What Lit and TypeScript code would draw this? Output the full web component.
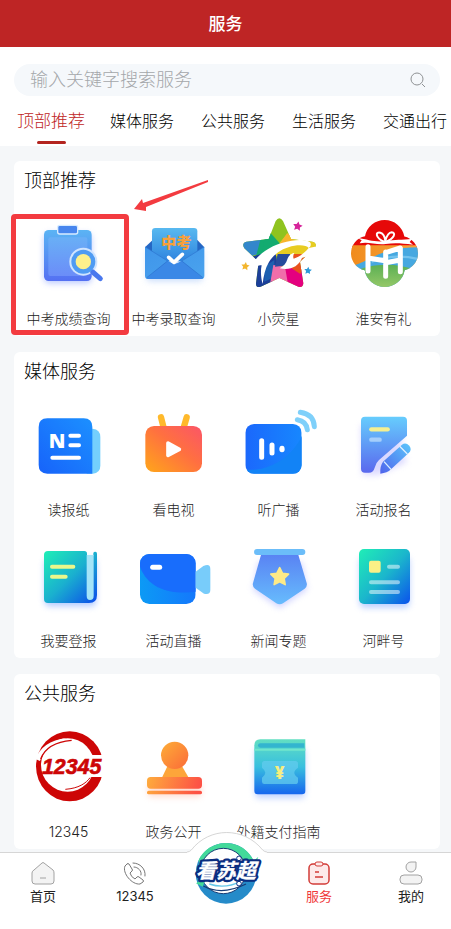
import { LitElement, html, svg, css, nothing, SVGTemplateResult } from "lit";
import { customElement, property, state } from "lit/decorators.js";
import { classMap } from "lit/directives/class-map.js";

interface Tile { label: string; icon: string; marked?: boolean }
interface Section { title: string; tiles: Tile[] }
interface Glyph { box: string; art: SVGTemplateResult }

const star = (cx: number, cy: number, r: number, turn = 0) =>
  Array.from({ length: 10 }, (_, i) => {
    const a = ((i * 36 - 90 + turn) * Math.PI) / 180;
    const d = i % 2 ? r * 0.5 : r;
    return `${(cx + d * Math.cos(a)).toFixed(1)},${(cy + d * Math.sin(a)).toFixed(1)}`;
  }).join(" ");

const GLYPHS: Record<string, Glyph> = {
  score: {
    box: "99 204 216 216",
    art: svg`
      <defs>
        <linearGradient id="a" x2="0" y2="1"><stop stop-color="#5bb4f4"/><stop offset="1" stop-color="#5470f2"/></linearGradient>
        <linearGradient id="b" x2="0" y2="1"><stop stop-color="#69aff6"/><stop offset="1" stop-color="#6b8df8"/></linearGradient>
      </defs>
      <rect class="glow" x="132" y="250" width="143" height="150" rx="16" fill="#8da6ff"/>
      <rect x="132" y="240" width="143" height="153" rx="14" fill="url(#a)"/>
      <rect x="145" y="262" width="117" height="116" rx="6" fill="url(#b)"/>
      <rect x="173" y="226" width="60" height="26" rx="6" fill="#4886ee" stroke="#d8ecff" stroke-width="4"/>
      <circle cx="250" cy="335" r="42" fill="#cfe4ff"/>
      <path d="M278 366L301 386" stroke="#4a78ee" stroke-width="15" stroke-linecap="round"/>
      <circle cx="250" cy="335" r="36" fill="#4f9bf3"/>
      <circle cx="250" cy="335" r="23" fill="#fdf08c"/>`,
  },
  admit: {
    box: "414 204 216 216",
    art: svg`
      <defs>
        <linearGradient id="a" x2="0" y2="1"><stop stop-color="#58b9f0"/><stop offset="1" stop-color="#2f84df"/></linearGradient>
        <linearGradient id="b" x2="1" y2="1"><stop stop-color="#3f95ea"/><stop offset="1" stop-color="#4aa3ee"/></linearGradient>
      </defs>
      <rect class="glow" x="440" y="300" width="168" height="94" rx="10" fill="#a9c8f8"/>
      <path d="M435 292L458 270H592L613 292L590 330H460Z" fill="#2567c4"/>
      <rect x="456" y="234" width="136" height="100" rx="10" fill="url(#a)"/>
      <path d="M435 290L524 345L613 290V377Q613 387 603 387H445Q435 387 435 377Z" fill="url(#b)"/>
      <path d="M440 384L502 332Q524 350 546 332L609 384Q606 387 600 387H445Z" fill="#3b88e6"/>
      <path d="M440 383L503 333M609 383L545 333M436 291L503 333M612 291L545 333" fill="none" stroke="#2c72cf" stroke-width="2"/>
      <text x="529" y="295" text-anchor="middle" class="cjk" font-size="46" fill="#f6a03c">中考</text>
      <path d="M506 322L522 337L547 313" fill="none" stroke="#fff" stroke-width="11" stroke-linecap="round" stroke-linejoin="round"/>`,
  },
  firefly: {
    box: "54 204 216 216",
    art: svg`
      <defs><clipPath id="a"><path d="M152 213Q163 196 174 213L198 267L262 275Q279 280 268 295L225 335L235 400Q234 414 220 410L163 384L107 410Q92 414 93 400L101 335L58 295Q49 280 64 275L131 267Z"/></clipPath></defs>
      <g clip-path="url(#a)">
        <rect x="50" y="200" width="230" height="220" fill="#8fc31f"/>
        <path d="M50 265L112 270L98 312L50 330Z" fill="#3387cb"/>
        <path d="M108 262L133 246L163 280L150 310L90 330L98 300Z" fill="#13ab70"/>
        <path d="M133 246L163 280L188 250L196 262L280 270V318H150Z" fill="#e8cc20"/>
        <path d="M120 262L134 246L164 280L160 300L110 310Z" fill="#13ab70"/>
        <path d="M164 282L186 250L204 262L198 290Z" fill="#f7b52c"/>
        <path d="M80 320L150 300L158 345L135 420H80Z" fill="#1c3f98"/>
        <path d="M118 350L148 330V355L140 385L118 395Z" fill="#1d5fb0"/>
        <path d="M145 345L180 350L198 420H132Z" fill="#f06eaa"/>
        <path d="M180 350L225 345L250 420H192Z" fill="#e4007f"/>
        <path d="M200 312H250L226 372L195 352Z" fill="#e8521d"/>
        <path d="M158 312H195V345L150 350Z" fill="#274b9c"/>
      </g>
      <path d="M70 362C92 316 135 282 200 272C232 267 256 272 257 280C258 288 256 291 251 294C246 286 228 284 208 287C176 292 148 310 132 336C120 356 116 378 113 402C108 384 106 364 110 346C100 346 84 350 70 362Z" fill="#fff"/>
      <path d="M270 290C276 302 276 312 273 320C256 317 242 320 231 324C220 350 196 362 164 355C176 349 184 340 187 328C190 318 198 310 208 309C204 316 204 322 206 326C224 320 240 308 251 294Z" fill="#fff"/>
      <polygon points="${star(218, 229, 15, 10)}" fill="#d6249a"/>
      <polygon points="${star(61, 349, 13, 8)}" fill="#f3b52c"/>
      <polygon points="${star(249, 362, 12, 5)}" fill="#2e9bd8"/>`,
  },
  gift: {
    box: "369 204 216 216",
    art: svg`
      <defs>
        <clipPath id="a"><circle cx="479" cy="270" r="60"/><circle cx="430" cy="310" r="52"/><circle cx="527" cy="310" r="52"/><circle cx="479" cy="350" r="61"/></clipPath>
        <linearGradient id="b" x2="0" y2="1"><stop stop-color="#5cb054"/><stop offset="1" stop-color="#9ccb6a"/></linearGradient>
        <linearGradient id="c" x2="1" y2="0"><stop stop-color="#f08a1c"/><stop offset="1" stop-color="#f7a63c"/></linearGradient>
      </defs>
      <g clip-path="url(#a)">
        <rect x="370" y="205" width="216" height="90" fill="#e60909"/>
        <path d="M370 286H590V350H370Z" fill="url(#c)"/>
        <path d="M390 345C440 330 470 290 590 292V420H390Z" fill="#46a8e0"/>
        <path d="M440 335C480 320 530 312 590 330" fill="none" stroke="#73c3ee" stroke-width="7"/>
        <path d="M370 372C440 338 510 335 590 366V420H370Z" fill="url(#b)"/>
      </g>
      <path d="M398 264C430 268 450 278 482 273C510 268 530 270 562 266L554 276L564 284C530 280 510 278 482 282C450 285 430 274 404 280L410 271Z" fill="#fff"/>
      <path d="M479 276C448 262 452 244 466 248C476 251 480 264 481 272C484 262 490 248 500 247C514 248 508 266 482 276Z" fill="none" stroke="#fff" stroke-width="6"/>
      <path d="M429 290V363M429 324L480 332M482 306V379M482 308L526 294V365M482 338L526 330" fill="none" stroke="#fff" stroke-width="15" stroke-linecap="round" stroke-linejoin="round"/>`,
  },
  paper: {
    box: "99 192 216 216",
    art: svg`
      <defs><linearGradient id="a" x1="1" y1="0" x2="0" y2="1"><stop stop-color="#1c90ff"/><stop offset="1" stop-color="#1763fa"/></linearGradient></defs>
      <path d="M260 251H278Q301 253 301 276V362Q301 384 278 386H260Z" fill="#74cffd"/>
      <path d="M142 220H251Q277 220 277 246V386H142Q116 386 116 360V246Q116 220 142 220Z" fill="url(#a)"/>
      <text x="171" y="310" text-anchor="middle" class="heavy" font-size="60" fill="#fff">N</text>
      <path d="M211 272H237M211 301H237M157 338H237" stroke="#fff" stroke-width="12" stroke-linecap="round"/>`,
  },
  tv: {
    box: "414 192 216 216",
    art: svg`
      <defs><linearGradient id="a" x1="0" y1="1" x2="1" y2="0"><stop stop-color="#ffa61a"/><stop offset=".55" stop-color="#ff7040"/><stop offset="1" stop-color="#fb5568"/></linearGradient></defs>
      <path d="M483 217L491 248M560 217L551 248" stroke="#ffb92b" stroke-width="19" stroke-linecap="round"/>
      <rect x="436" y="243" width="170" height="138" rx="26" fill="url(#a)"/>
      <path d="M504 294L538 313L504 331Z" fill="#fff" stroke="#fff" stroke-width="11" stroke-linejoin="round"/>`,
  },
  radio: {
    box: "54 192 216 216",
    art: svg`
      <defs><clipPath id="a"><rect x="61" y="237" width="169" height="149" rx="26"/></clipPath>
      <linearGradient id="b" x2="1" y2="0"><stop stop-color="#1b68fc"/><stop offset="1" stop-color="#1787fe"/></linearGradient></defs>
      <g clip-path="url(#a)">
        <rect x="61" y="237" width="169" height="149" fill="url(#b)"/>
        <path d="M61 374C130 380 200 340 232 270V390H61Z" fill="#1283f6"/>
      </g>
      <path d="M110 287V337M141 300V324" stroke="#fff" stroke-width="15" stroke-linecap="round"/>
      <ellipse cx="171" cy="312" rx="8" ry="10" fill="#fff"/>
      <path d="M226 202C252 206 267 220 268 245M217 224C236 227 245 236 247 254" fill="none" stroke="#7fd0fa" stroke-width="15" stroke-linecap="round"/>`,
  },
  signup: {
    box: "369 192 216 216",
    art: svg`
      <defs>
        <linearGradient id="a" x2="0" y2="1"><stop stop-color="#66cdfd"/><stop offset="1" stop-color="#5a68ee"/></linearGradient>
        <linearGradient id="b" x1="1" y1="0" x2="0" y2="1"><stop stop-color="#5bc6fb"/><stop offset="1" stop-color="#4f63ec"/></linearGradient>
      </defs>
      <path class="glow" d="M408 240H530V320L546 350L460 390H412Z" fill="#c4c0ff"/>
      <path d="M420 215H534Q546 215 546 227V272L462 345Q452 354 449 368Q445 383 432 383H420Q408 383 408 371V227Q408 215 420 215Z" fill="url(#a)"/>
      <path d="M439 253H488" stroke="#f5ef90" stroke-width="13" stroke-linecap="round"/>
      <path d="M439 284H464" stroke="#a5cefb" stroke-width="13" stroke-linecap="round"/>
      <path d="M474 350L531 299Q542 291 553 302Q562 314 551 324L498 373Q487 384 466 386Q464 364 474 350Z" fill="url(#b)"/>
      <path d="M477 350L499 374M524 304L547 327" stroke="#dcefff" stroke-width="4"/>`,
  },
  publish: {
    box: "99 45 216 216",
    art: svg`
      <defs><linearGradient id="a" x2="1" y2="1"><stop stop-color="#1fefb6"/><stop offset=".5" stop-color="#1ab0cf"/><stop offset="1" stop-color="#0b4bea"/></linearGradient></defs>
      <rect class="glow" x="134" y="100" width="154" height="144" rx="14" fill="#7fa8ff"/>
      <path d="M144 78H253Q261 78 261 86V92H280V84Q281 80 286 80Q291 80 291 86V210Q291 234 267 234H144Q132 234 132 222V90Q132 78 144 78Z" fill="url(#a)"/>
      <path d="M260 90H281V212Q281 225 270 225Q260 225 260 212Z" fill="#a4e4f8"/>
      <path d="M156 125H220M156 155H197" stroke="#eaf78b" stroke-width="12" stroke-linecap="round"/>`,
  },
  live: {
    box: "414 45 216 216",
    art: svg`
      <defs><clipPath id="a"><rect x="420" y="87" width="167" height="150" rx="28"/></clipPath>
      <linearGradient id="b" x2="1" y2="0"><stop stop-color="#0c9af5"/><stop offset="1" stop-color="#1478fc"/></linearGradient></defs>
      <g clip-path="url(#a)">
        <rect x="420" y="87" width="167" height="150" fill="url(#b)"/>
        <path d="M420 85H590V200C520 210 445 195 420 125Z" fill="#186dfc"/>
      </g>
      <path d="M587 140L610 123Q631 114 631 132V194Q631 211 612 206L587 188Z" fill="#78ccfa"/>
      <path d="M458 127H479" stroke="#fff" stroke-width="15" stroke-linecap="round"/>`,
  },
  topic: {
    box: "54 45 216 216",
    art: svg`
      <defs><linearGradient id="a" x2="0" y2="1"><stop stop-color="#5982f3"/><stop offset="1" stop-color="#67bcfd"/></linearGradient></defs>
      <path class="glow" d="M100 110H230L246 194L164 250L84 194Z" fill="#b3b8ff"/>
      <path d="M109 86H219L245 174Q248 184 239 191L174 235Q164 241 154 235L90 191Q81 184 84 174Z" fill="url(#a)"/>
      <rect x="87" y="72" width="154" height="18" rx="9" fill="#6bbdf9"/>
      <polygon points="${star(164, 156, 28)}" fill="#fdea88" stroke="#fdea88" stroke-width="5" stroke-linejoin="round"/>`,
  },
  channel: {
    box: "369 45 216 216",
    art: svg`
      <defs><linearGradient id="a" x2="1" y2="1"><stop stop-color="#20eeb6"/><stop offset=".5" stop-color="#1bb6cc"/><stop offset="1" stop-color="#0b52ec"/></linearGradient></defs>
      <rect class="glow" x="404" y="96" width="150" height="152" rx="14" fill="#8fb0ff"/>
      <rect x="402" y="72" width="153" height="165" rx="15" fill="url(#a)"/>
      <rect x="432" y="107" width="35" height="36" rx="6" fill="#fbf086"/>
      <path d="M492 125H519M438 172H519M438 201H519" stroke="#fff" stroke-opacity=".5" stroke-width="12" stroke-linecap="round"/>`,
  },
  hotline: {
    box: "99 198 216 216",
    art: svg`
      <ellipse cx="209" cy="304" rx="101" ry="105" fill="#cd0606"/>
      <circle cx="203" cy="300" r="80" fill="#fff"/>
      <path d="M106 282C118 250 150 224 200 219C160 232 130 252 120 288Z" fill="#fff"/>
      <path d="M122 282C136 245 168 230 215 226" fill="none" stroke="#cd0606" stroke-width="4"/>
      <path d="M196 373C236 370 258 355 270 338" fill="none" stroke="#cd0606" stroke-width="3"/>
      <path d="M265 270H316V336H255Z" fill="#fff"/>
      <text x="215" y="328" text-anchor="middle" class="digits" font-size="64" fill="#cd0606" stroke="#cd0606" stroke-width="2">12345</text>`,
  },
  stamp: {
    box: "414 198 216 216",
    art: svg`
      <defs><linearGradient id="a" gradientUnits="userSpaceOnUse" x1="450" y1="300" x2="600" y2="350"><stop stop-color="#feae3c"/><stop offset="1" stop-color="#fd5245"/></linearGradient>
      <linearGradient id="b" x2="1" y2="1"><stop stop-color="#fdae38"/><stop offset="1" stop-color="#fb6a38"/></linearGradient></defs>
      <rect class="glow" x="444" y="350" width="160" height="46" rx="10" fill="#ffc9b8"/>
      <path d="M504 300H544L567 340H485Z" fill="#fda53a"/>
      <circle cx="524" cy="271" r="41" fill="url(#b)"/>
      <rect x="441" y="336" width="165" height="35" rx="11" fill="url(#a)"/>
      <rect x="441" y="377" width="165" height="11" rx="5" fill="url(#a)"/>`,
  },
  pay: {
    box: "54 198 216 216",
    art: svg`
      <defs><linearGradient id="a" x2="0" y2="1"><stop stop-color="#62dfc2"/><stop offset=".5" stop-color="#38bfdf"/><stop offset="1" stop-color="#1665ee"/></linearGradient></defs>
      <rect class="glow" x="90" y="250" width="150" height="150" rx="12" fill="#9db8ff"/>
      <path d="M106 223H241V378Q241 388 231 388H98Q88 388 88 378V241Q88 223 106 223Z" fill="url(#a)"/>
      <path d="M106 235H238V248H106Q99 248 99 241Q99 235 106 235Z" fill="#33b5cf"/>
      <path d="M88 251H241V257H88Z" fill="#70e6cd"/>
      <path d="M118 288H211Q219 288 219 296V308Q208 316 208 323Q208 330 219 338V350Q219 357 211 357H118Q111 357 111 350V338Q121 330 121 323Q121 316 111 308V296Q111 288 118 288Z" fill="#63cbee" fill-opacity=".75"/>
      <text x="164" y="342" text-anchor="middle" class="heavy" font-size="50" fill="#f7ee80">¥</text>`,
  },
};

const SECTIONS: Section[] = [
  { title: "顶部推荐", tiles: [
    { label: "中考成绩查询", icon: "score", marked: true },
    { label: "中考录取查询", icon: "admit" },
    { label: "小荧星", icon: "firefly" },
    { label: "淮安有礼", icon: "gift" },
  ] },
  { title: "媒体服务", tiles: [
    { label: "读报纸", icon: "paper" },
    { label: "看电视", icon: "tv" },
    { label: "听广播", icon: "radio" },
    { label: "活动报名", icon: "signup" },
    { label: "我要登报", icon: "publish" },
    { label: "活动直播", icon: "live" },
    { label: "新闻专题", icon: "topic" },
    { label: "河畔号", icon: "channel" },
  ] },
  { title: "公共服务", tiles: [
    { label: "12345", icon: "hotline" },
    { label: "政务公开", icon: "stamp" },
    { label: "外籍支付指南", icon: "pay" },
  ] },
];

// Each tile owns a shadow root, so gradient ids stay private to its icon.
@customElement("service-tile")
export class ServiceTile extends LitElement {
  @property() label = "";
  @property() icon = "";
  @property({ type: Boolean }) marked = false;

  static styles = css`
    :host { display: block; min-width: 0; }
    .tile {
      position: relative; display: flex; flex-direction: column; align-items: center;
      gap: 19px; color: #222; text-decoration: none;
    }
    .icon { display: block; width: 72px; height: 72px; overflow: visible; }
    .label { font-size: 14px; line-height: 20px; white-space: nowrap; }
    .glow { filter: blur(9px); opacity: .6; }
    .cjk { font-family: "Noto Sans CJK SC", sans-serif; font-weight: 900; }
    .heavy { font-family: "Open Sans", sans-serif; font-weight: 800; }
    .digits { font-family: "Liberation Sans", sans-serif; font-weight: 700; font-style: italic; }
    .frame {
      position: absolute; top: -4px; bottom: -6px; left: 50%; width: 108px; margin-left: -58px;
      border: 5px solid #f33b40; border-radius: 4px; pointer-events: none;
    }
    .arrow { position: absolute; left: 117px; top: -39px; width: 78px; height: 34px; pointer-events: none; }
  `;

  render() {
    const glyph = GLYPHS[this.icon];
    return html`
      <a class="tile" href="#${this.icon}">
        <svg class="icon" viewBox=${glyph.box} aria-hidden="true">${glyph.art}</svg>
        <span class="label">${this.label}</span>
        ${this.marked ? html`
          <span class="frame"></span>
          <svg class="arrow" viewBox="0 0 78 34" aria-hidden="true">
            <path d="M1 30L9 20L10 24L75 1L75 3L13 28L13 32Z" fill="#f33b40"/>
          </svg>` : nothing}
      </a>`;
  }
}

@customElement("tab-bar")
export class TabBar extends LitElement {
  static styles = css`
    :host { display: block; position: sticky; bottom: 0; z-index: 2; font-weight: 400; }
    .bar {
      display: flex; justify-content: space-between; box-sizing: border-box; min-height: 77px;
      padding: 8px 11px 20px 14px; background: #fff; border-top: 1px solid #d6d6d6;
    }
    .item {
      position: relative; display: flex; flex-direction: column; align-items: center; gap: 1px;
      width: 58px; color: #222; text-decoration: none; font-size: 13px; line-height: 20px;
    }
    .item.active { color: #f0383a; }
    .icon { width: 24px; height: 24px; fill: none; stroke: #a2a2a2; }
    .active .icon { stroke: #d23c38; }
    .emblem { position: absolute; left: -11px; top: -31px; width: 80px; height: 76px; }
    .logo { font-family: "Noto Sans CJK SC", sans-serif; font-weight: 700; font-style: italic; }
  `;

  render() {
    return html`
      <nav class="bar" aria-label="主导航">
        <a class="item" href="#home">
          <svg class="icon" viewBox="0 0 24 24"><path d="M3 9L11 2Q12 1 13 2L22 9Q23 10 23 12V20Q23 23 20 23H4Q1 23 1 20V12Q1 10 3 9Z" fill="#f3f3f3"/><path d="M9 17H15"/></svg>
          <span>首页</span>
        </a>
        <a class="item" href="#hotline">
          <svg class="icon" viewBox="0 0 24 24"><path stroke="#777" stroke-linejoin="round" stroke-linecap="round" d="M4 3L2 5C-1 12 9 24 17 23L20 21Q21 20 20 19L16 16Q15 15 14 16L12 18Q8 16 7 12L9 10Q10 9 9 8L6 3Q5 2 4 3ZM10 2C17 2 23 8 22 15M11 6C15 6 19 10 18 14"/></svg>
          <span>12345</span>
        </a>
        <a class="item" href="#league" aria-label="看苏超">
          <svg class="emblem" viewBox="51 30 240 228">
            <path d="M51 96Q58 96 64 90C118 20 222 20 278 90Q284 96 291 96V150H51Z" fill="#fff"/>
            <path d="M51 96Q58 96 64 90C118 20 222 20 278 90Q284 96 291 96" fill="none" stroke="#d6d6d6" stroke-width="3"/>
            <circle cx="168" cy="160" r="91" fill="#258bc9"/>
            <path d="M85 122A91 91 0 0 1 252 125L236 150L120 165Z" fill="#43d99a"/>
            <circle cx="160" cy="153" r="68" fill="#fff" stroke="#173c75" stroke-width="3"/>
            <path d="M100 198Q155 228 228 192" fill="none" stroke="#173c75" stroke-width="4"/>
            <path d="M118 192Q165 208 212 184" fill="none" stroke="#65c7e8" stroke-width="4"/>
            <path d="M246 116L252 122L265 110L260 124L268 128L250 134ZM78 190L90 182L104 184L98 200Z" fill="#43d99a"/>
            <g class="logo" font-size="60" text-anchor="middle">
              <text x="168" y="173" fill="#0a2d80" stroke="#0a2d80" stroke-width="15" stroke-linejoin="round">看苏超</text>
              <text x="168" y="173" fill="#fff" stroke="#fff" stroke-width="1">看苏超</text>
            </g>
            <circle cx="207" cy="115" r="7" fill="#fff" stroke="#0a2d80" stroke-width="3"/>
            <circle cx="207" cy="191" r="7" fill="#fff" stroke="#0a2d80" stroke-width="3"/>
          </svg>
        </a>
        <a class="item active" href="#services" aria-current="page">
          <svg class="icon" viewBox="0 0 24 24"><rect x="2" y="3" width="20" height="20" rx="4" fill="#fdeaea" stroke-width="1.5"/><rect x="8" y="1" width="8" height="4" rx="2" fill="#fdeaea"/><path d="M8 11H12M8 16H16" stroke-width="1.5"/></svg>
          <span>服务</span>
        </a>
        <a class="item" href="#me">
          <svg class="icon" viewBox="0 0 24 24"><path d="M12 1H17V6A5 5 0 1 1 12 1Z" fill="#f3f3f3"/><rect x="1" y="14" width="22" height="9" rx="4" fill="#f3f3f3"/></svg>
          <span>我的</span>
        </a>
      </nav>`;
  }
}

@customElement("app-root")
export class AppRoot extends LitElement {
  @state() private tab = 0;
  private tabs = ["顶部推荐", "媒体服务", "公共服务", "生活服务", "交通出行"];

  static styles = css`
    :host {
      display: flex; flex-direction: column; min-height: 100vh; background: #f5f7f9; color: #000;
      font-family: Inter, "Noto Sans CJK SC", sans-serif; font-weight: 300;
    }
    .header {
      display: flex; align-items: center; justify-content: center; height: 47px;
      background: #be2525; color: #fff;
    }
    .heading { margin: 0; font-size: 17px; line-height: 24px; font-weight: 500; }
    .top { background: #fff; padding-top: 17px; }
    .search {
      display: flex; align-items: center; height: 32px; margin: 0 11px 0 14px; padding: 0 12px 0 16px;
      border-radius: 16px; background: #f5f8fb;
    }
    .field {
      flex: 1; min-width: 0; border: 0; padding: 0; outline: 0; background: none; color: #333;
      font: inherit; font-size: 18px; line-height: 28px;
    }
    .field::placeholder { color: #a4a7aa; opacity: 1; }
    .find { display: flex; border: 0; padding: 2px; background: none; }
    .lens { width: 16px; height: 16px; fill: none; stroke: #8f9294; }
    .tabs { display: flex; gap: 27px; padding: 0 4px 0 19px; overflow-x: auto; scrollbar-width: none; }
    .tab {
      display: flex; flex-direction: column; align-items: center; flex: 0 0 64px; min-width: 0; gap: 8px;
      height: 50px; padding: 13px 0 0; border: 0; background: none; box-sizing: border-box;
      color: #000; font: inherit; font-size: 16px; line-height: 24px; white-space: nowrap;
    }
    .tab.active { color: #be2525; font-size: 17px; }
    .tab.active::after { content: ""; flex: none; width: 29px; height: 3px; border-radius: 2px; background: #b3241f; }
    .content { flex: 1; display: flex; flex-direction: column; gap: 16px; padding: 15px 11px 3px 14px; }
    .card { padding: 6px 4px 7px 2px; border-radius: 6px; background: #fff; }
    .title { margin: 0 0 23px; padding-left: 8px; font-size: 18px; line-height: 28px; font-weight: 300; }
    .grid { display: grid; grid-template-columns: repeat(4, minmax(0, 1fr)); row-gap: 20px; }
  `;

  render() {
    return html`
      <header class="header"><h1 class="heading">服务</h1></header>
      <div class="top">
        <form class="search" role="search" @submit=${(e: Event) => e.preventDefault()}>
          <input class="field" type="text" aria-label="搜索服务" placeholder="输入关键字搜索服务">
          <button class="find" aria-label="搜索">
            <svg class="lens" viewBox="0 0 16 16"><circle cx="7" cy="7" r="6"/><path d="M12 12L15 15"/></svg>
          </button>
        </form>
        <div class="tabs">
          ${this.tabs.map((name, i) => html`
            <button class=${classMap({ tab: true, active: i === this.tab })} @click=${() => (this.tab = i)}>${name}</button>`)}
        </div>
      </div>
      <main class="content">
        ${SECTIONS.map((s) => html`
          <section class="card">
            <h2 class="title">${s.title}</h2>
            <div class="grid">
              ${s.tiles.map((t) => html`
                <service-tile .label=${t.label} .icon=${t.icon} .marked=${!!t.marked}></service-tile>`)}
            </div>
          </section>`)}
      </main>
      <tab-bar></tab-bar>`;
  }
}
